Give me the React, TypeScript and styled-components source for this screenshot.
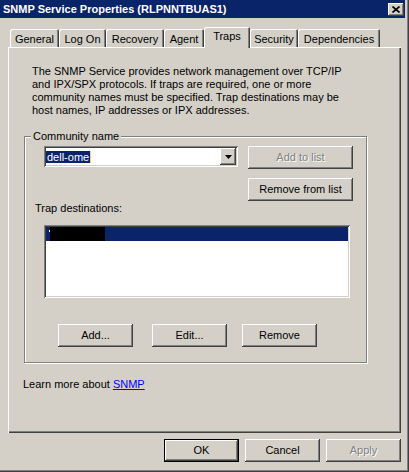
import React from 'react'
import styled, { createGlobalStyle } from 'styled-components'

const FACE = '#d4d0c8'
const NAVY = '#0a246a'

const GlobalStyle = createGlobalStyle`
  html, body {
    margin: 0;
    padding: 0;
    background: ${FACE};
  }
  body {
    font-family: 'Liberation Sans', Arial, sans-serif;
    font-size: 11px;
    color: #000;
  }
`

const raised = `
  box-shadow: inset -1px -1px #404040, inset 1px 1px #fff,
    inset -2px -2px #808080, inset 2px 2px ${FACE};
`

const sunken = `
  box-shadow: inset 1px 1px #808080, inset -1px -1px #fff,
    inset 2px 2px #404040, inset -2px -2px ${FACE};
`

const TABS = ['General', 'Log On', 'Recovery', 'Agent', 'Traps', 'Security', 'Dependencies']
const TAB_WIDTHS = [49, 47, 58, 40, 46, 48, 82]

export default function App() {
  return (
    <>
      <GlobalStyle />
      <Window>
        <TitleBar>
          <span>SNMP Service Properties (RLPNNTBUAS1)</span>
          <CloseButton>
            <svg width="8" height="7" viewBox="0 0 8 7">
              <path d="M0.5 0.5 L7.5 6.5 M7.5 0.5 L0.5 6.5" stroke="#000" strokeWidth="1.6" />
            </svg>
          </CloseButton>
        </TitleBar>

        <Body>
          <TabRow>
            {TABS.map((t, i) => (
              <Tab key={t} $w={TAB_WIDTHS[i]} $active={t === 'Traps'}>
                {t}
              </Tab>
            ))}
          </TabRow>

          <Panel>
            <Description>
              The SNMP Service provides network management over TCP/IP
              <br />
              and IPX/SPX protocols. If traps are required, one or more
              <br />
              community names must be specified. Trap destinations may be
              <br />
              host names, IP addresses or IPX addresses.
            </Description>

            <GroupBox>
              <Legend>Community name</Legend>
              <TopRow>
                <Combo>
                  <ComboText>
                    <Highlight>dell-ome</Highlight>
                    <Caret />
                  </ComboText>
                  <DropButton>
                    <svg width="7" height="4" viewBox="0 0 7 4">
                      <path d="M0 0 H7 L3.5 4 Z" fill="#000" />
                    </svg>
                  </DropButton>
                </Combo>
                <ButtonColumn>
                  <PushButton $w={105} $disabled>Add to list</PushButton>
                  <PushButton $w={105}>Remove from list</PushButton>
                </ButtonColumn>
              </TopRow>

              <FieldLabel>Trap destinations:</FieldLabel>
              <ListBox>
                <SelectedRow>
                  <Dot />
                  <Redacted />
                </SelectedRow>
              </ListBox>

              <ActionRow>
                <PushButton $w={75}>Add...</PushButton>
                <PushButton $w={75} $ml={19}>Edit...</PushButton>
                <PushButton $w={75} $ml={15}>Remove</PushButton>
              </ActionRow>
            </GroupBox>

            <LearnMore>
              Learn more about <Link href="#">SNMP</Link>
            </LearnMore>
          </Panel>

          <Footer>
            <PushButton $w={75} $default>OK</PushButton>
            <PushButton $w={75}>Cancel</PushButton>
            <PushButton $w={75} $disabled>Apply</PushButton>
          </Footer>
        </Body>
      </Window>
    </>
  )
}

const Window = styled.div`
  width: 409px;
  height: 472px;
  box-sizing: border-box;
  background: ${FACE};
  display: flex;
  flex-direction: column;
  box-shadow: inset -1px -1px #404040, inset -2px -2px #808080;
`

const TitleBar = styled.div`
  height: 18px;
  margin-right: 4px;
  padding: 0 1px 0 3px;
  background: ${NAVY};
  color: #fff;
  font-weight: bold;
  font-size: 11px;
  display: flex;
  align-items: center;
  justify-content: space-between;
  white-space: nowrap;
`

const CloseButton = styled.div`
  width: 16px;
  height: 13px;
  margin-top: 1px;
  background: ${FACE};
  ${raised}
  display: flex;
  align-items: center;
  justify-content: center;
  padding-bottom: 1px;
  box-sizing: border-box;
`

const Body = styled.div`
  display: flex;
  flex-direction: column;
  padding: 9px 8px 0 8px;
`

const TabRow = styled.div`
  display: flex;
  align-items: flex-end;
  height: 20px;
  padding-left: 2px;
`

const Tab = styled.div<{ $w: number; $active?: boolean }>`
  width: ${(p) => p.$w}px;
  height: ${(p) => (p.$active ? 21 : 18)}px;
  margin-bottom: ${(p) => (p.$active ? -1 : 0)}px;
  padding-top: ${(p) => (p.$active ? 3 : 4)}px;
  box-sizing: border-box;
  position: relative;
  z-index: ${(p) => (p.$active ? 1 : 0)};
  background: ${FACE};
  border-radius: 2px 2px 0 0;
  box-shadow: inset 1px 1px #fff, inset -1px 0 #404040, inset -2px 0 #808080;
  text-align: center;
  line-height: 13px;
  white-space: nowrap;
`

const Panel = styled.div`
  height: 386px;
  box-sizing: border-box;
  display: flex;
  flex-direction: column;
  align-items: flex-start;
  box-shadow: inset 1px 1px #fff, inset -1px -1px #404040, inset -2px -2px #808080;
`

const Description = styled.p`
  margin: 18px 0 0 24px;
  line-height: 13px;
  white-space: nowrap;
`

const GroupBox = styled.div`
  position: relative;
  margin: 19px 0 0 16px;
  width: 343px;
  height: 227px;
  box-sizing: border-box;
  border: 1px solid #808080;
  box-shadow: inset 1px 1px #fff, 1px 1px 0 #fff;
  padding-top: 9px;
  display: flex;
  flex-direction: column;
  align-items: flex-start;
`

const Legend = styled.span`
  position: absolute;
  top: -7px;
  left: 6px;
  padding: 0 2px;
  background: ${FACE};
  line-height: 13px;
`

const TopRow = styled.div`
  display: flex;
  align-items: flex-start;
  margin-left: 19px;
`

const Combo = styled.div`
  width: 194px;
  height: 21px;
  box-sizing: border-box;
  padding: 2px;
  background: #fff;
  ${sunken}
  display: flex;
  align-items: stretch;
`

const ComboText = styled.div`
  flex: 1;
  display: flex;
  align-items: center;
`

const Highlight = styled.span`
  margin-left: 0px;
  padding: 0 1px;
  background: ${NAVY};
  color: #fff;
  line-height: 12px;
`

const Caret = styled.span`
  width: 1px;
  height: 12px;
  background: #f3d36a;
`

const DropButton = styled.div`
  width: 16px;
  height: 17px;
  background: ${FACE};
  ${raised}
  display: flex;
  align-items: center;
  justify-content: center;
`

const ButtonColumn = styled.div`
  display: flex;
  flex-direction: column;
  gap: 9px;
  margin-left: 10px;
`

const PushButton = styled.div<{ $w: number; $ml?: number; $disabled?: boolean; $default?: boolean }>`
  width: ${(p) => p.$w}px;
  height: 23px;
  margin-left: ${(p) => p.$ml ?? 0}px;
  box-sizing: border-box;
  background: ${FACE};
  border: ${(p) => (p.$default ? '1px solid #000' : 'none')};
  ${raised}
  display: flex;
  align-items: center;
  justify-content: center;
  line-height: 13px;
  white-space: nowrap;
  color: ${(p) => (p.$disabled ? '#808080' : '#000')};
  text-shadow: ${(p) => (p.$disabled ? '1px 1px 0 #fff' : 'none')};
`

const FieldLabel = styled.div`
  margin: 1px 0 0 10px;
  line-height: 13px;
`

const ListBox = styled.div`
  margin: 10px 0 0 19px;
  width: 306px;
  height: 73px;
  box-sizing: border-box;
  padding: 2px;
  background: #fff;
  ${sunken}
`

const SelectedRow = styled.div`
  height: 14px;
  background: ${NAVY};
  display: flex;
  align-items: flex-start;
`

const Dot = styled.span`
  width: 1px;
  height: 2px;
  margin: 3px 0 0 3px;
  background: #fff;
`

const Redacted = styled.span`
  width: 55px;
  height: 14px;
  background: #000;
`

const ActionRow = styled.div`
  display: flex;
  margin: 26px 0 0 33px;
`

const LearnMore = styled.div`
  margin: 15px 0 0 15px;
  line-height: 13px;
`

const Link = styled.a`
  color: #0000ff;
  text-decoration: underline;
`

const Footer = styled.div`
  display: flex;
  justify-content: flex-end;
  gap: 6px;
  margin-top: 6px;
`
